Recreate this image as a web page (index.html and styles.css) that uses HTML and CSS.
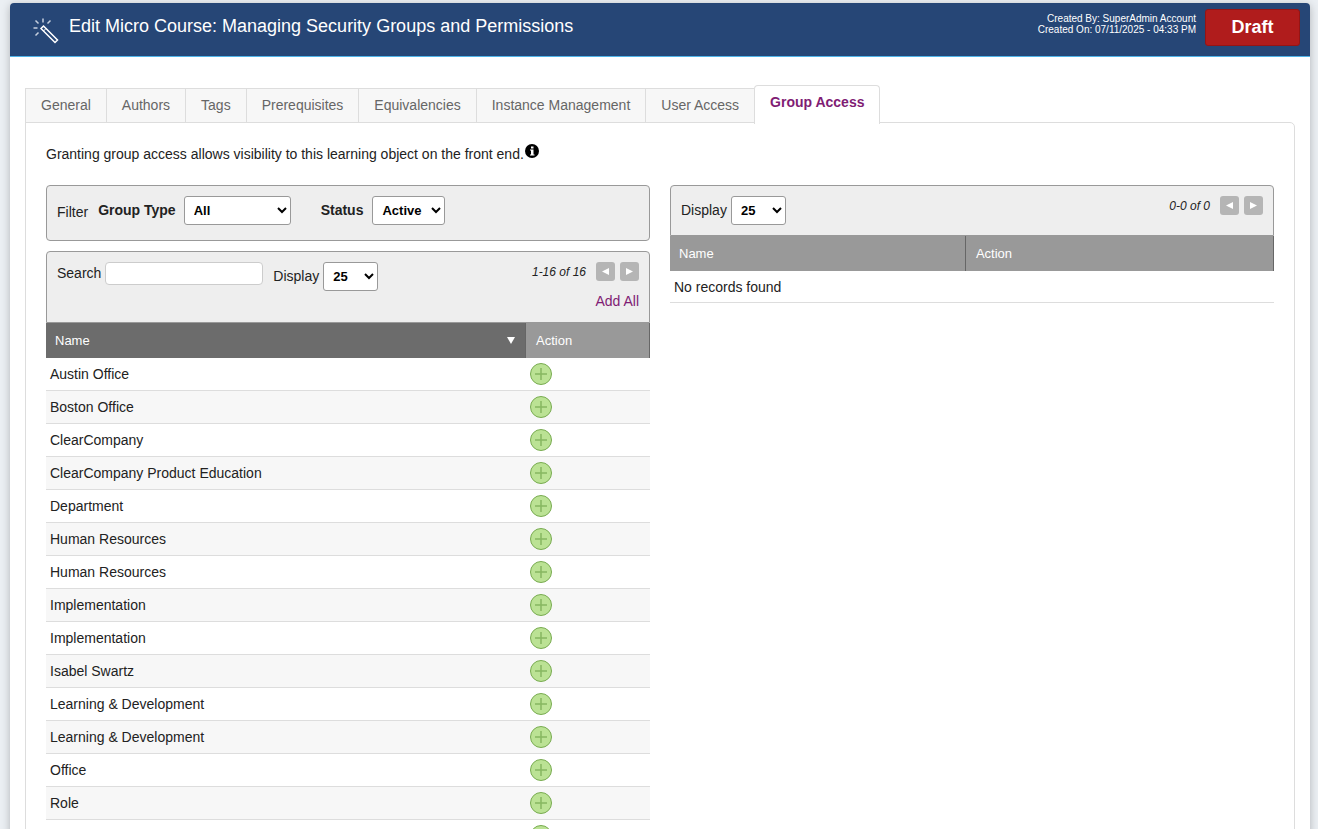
FILE: index.html
```
<!DOCTYPE html>
<html lang="en">
<head>
    <meta charset="UTF-8">
    <meta name="viewport" content="width=device-width, initial-scale=1.0">
    <title>Edit Micro Course</title>
    <link rel="stylesheet" href="styles.css">
</head>
<body>
<svg class="symbols" aria-hidden="true">
    <symbol id="plus" viewBox="0 0 22 22">
        <circle cx="11" cy="11" r="10.5" fill="#bbe294" stroke="#78ab50"/>
        <path d="M11 5v12M5 11h12" fill="none" stroke="#87b760" stroke-width="1.5"/>
    </symbol>
</svg>

<div class="page">
    <header class="page-header">
        <svg class="wand" viewBox="0 0 26 26" fill="none" stroke="#fff">
            <path d="M10.500 8L24.500 22L22 24.500L8 10.500Z" stroke-width="1.500"/>
            <path d="M10.500 13L13 10.500" stroke-width="1"/>
            <path d="M10 0.500V4.500M2.500 2.500L5.500 5.500M17.500 2.500L14.500 5.500M0.500 10H4.500M2.500 17.500L5.500 14.500" stroke="#c6d0df" stroke-width="1.500"/>
        </svg>
        <h1>Edit Micro Course: Managing Security Groups and Permissions</h1>
        <div class="created">
            Created By: SuperAdmin Account<br>
            Created On: 07/11/2025 - 04:33 PM
        </div>
        <div class="status-badge">Draft</div>
    </header>

    <main class="content">
        <nav class="tabs">
            <a href="#general">General</a>
            <a href="#authors">Authors</a>
            <a href="#tags">Tags</a>
            <a href="#prerequisites">Prerequisites</a>
            <a href="#equivalencies">Equivalencies</a>
            <a href="#instances">Instance Management</a>
            <a href="#users">User Access</a>
            <a href="#groups" class="active">Group Access</a>
        </nav>

        <section class="panel">
            <p class="intro">Granting group access allows visibility to this learning object on the front end.<svg class="info" viewBox="0 0 14 14">
                <circle cx="7" cy="7" r="7"/>
                <path d="M6 2.500h2.500v2H6zM5 5.500h3.500v5h1v1H5v-1h1v-4H5z" fill="#fff"/>
            </svg></p>

            <div class="columns">
                <div class="column">
                    <div class="filter-box">
                        <span class="filter-title">Filter</span>
                        <label for="groupType">Group Type</label>
                        <select id="groupType" class="type-select">
                            <option>All</option>
                        </select>
                        <label for="status" class="status-label">Status</label>
                        <select id="status" class="status-select">
                            <option>Active</option>
                        </select>
                    </div>

                    <div class="toolbar">
                        <div class="search">
                            <label for="search">Search</label>
                            <input type="text" id="search">
                        </div>
                        <div class="display">
                            <label for="displayLeft">Display</label>
                            <select id="displayLeft">
                                <option>25</option>
                            </select>
                        </div>
                        <div class="paging">
                            <div class="pager">
                                <i>1-16 of 16</i>
                                <button type="button" aria-label="Previous page"><svg viewBox="0 0 19 19"><path d="M6 9.500L13 6v7z"/></svg></button>
                                <button type="button" aria-label="Next page"><svg viewBox="0 0 19 19"><path d="M13 9.500L6 6v7z"/></svg></button>
                            </div>
                            <a href="#add-all">Add All</a>
                        </div>
                    </div>
                    <table class="available">
                        <thead>
                            <tr>
                                <th class="sorted"><span class="sort">Name <svg viewBox="0 0 8 7"><path d="M0 0h8L4 7z"/></svg></span></th>
                                <th>Action</th>
                            </tr>
                        </thead>
                        <tbody>
                            <tr><td>Austin Office</td><td><button type="button" aria-label="Add"><svg><use href="#plus"/></svg></button></td></tr>
                            <tr><td>Boston Office</td><td><button type="button" aria-label="Add"><svg><use href="#plus"/></svg></button></td></tr>
                            <tr><td>ClearCompany</td><td><button type="button" aria-label="Add"><svg><use href="#plus"/></svg></button></td></tr>
                            <tr><td>ClearCompany Product Education</td><td><button type="button" aria-label="Add"><svg><use href="#plus"/></svg></button></td></tr>
                            <tr><td>Department</td><td><button type="button" aria-label="Add"><svg><use href="#plus"/></svg></button></td></tr>
                            <tr><td>Human Resources</td><td><button type="button" aria-label="Add"><svg><use href="#plus"/></svg></button></td></tr>
                            <tr><td>Human Resources</td><td><button type="button" aria-label="Add"><svg><use href="#plus"/></svg></button></td></tr>
                            <tr><td>Implementation</td><td><button type="button" aria-label="Add"><svg><use href="#plus"/></svg></button></td></tr>
                            <tr><td>Implementation</td><td><button type="button" aria-label="Add"><svg><use href="#plus"/></svg></button></td></tr>
                            <tr><td>Isabel Swartz</td><td><button type="button" aria-label="Add"><svg><use href="#plus"/></svg></button></td></tr>
                            <tr><td>Learning &amp; Development</td><td><button type="button" aria-label="Add"><svg><use href="#plus"/></svg></button></td></tr>
                            <tr><td>Learning &amp; Development</td><td><button type="button" aria-label="Add"><svg><use href="#plus"/></svg></button></td></tr>
                            <tr><td>Office</td><td><button type="button" aria-label="Add"><svg><use href="#plus"/></svg></button></td></tr>
                            <tr><td>Role</td><td><button type="button" aria-label="Add"><svg><use href="#plus"/></svg></button></td></tr>
                            <tr><td></td><td><button type="button" aria-label="Add"><svg><use href="#plus"/></svg></button></td></tr>
                        </tbody>
                    </table>
                </div>

                <div class="column">
                    <div class="toolbar">
                        <div class="display">
                            <label for="displayRight">Display</label>
                            <select id="displayRight">
                                <option>25</option>
                            </select>
                        </div>
                        <div class="paging">
                            <div class="pager">
                                <i>0-0 of 0</i>
                                <button type="button" aria-label="Previous page"><svg viewBox="0 0 19 19"><path d="M6 9.500L13 6v7z"/></svg></button>
                                <button type="button" aria-label="Next page"><svg viewBox="0 0 19 19"><path d="M13 9.500L6 6v7z"/></svg></button>
                            </div>
                        </div>
                    </div>
                    <table class="selected">
                        <thead>
                            <tr>
                                <th>Name</th>
                                <th>Action</th>
                            </tr>
                        </thead>
                        <tbody>
                            <tr><td colspan="2">No records found</td></tr>
                        </tbody>
                    </table>
                </div>
            </div>
        </section>
    </main>
</div>
</body>
</html>
```
FILE: styles.css
```
* {
    box-sizing: border-box;
}
body {
    margin: 0;
    padding: 3px 8px 0 10px;
    height: 100vh;
    overflow: hidden;
    background-color: #ebeff3;
    color: #222;
    font-family: Arial, "Liberation Sans", sans-serif;
    font-size: 14px;
    line-height: 20px;
}
a {
    color: #7f1c74;
    text-decoration: none;
}
button {
    border: 0;
    padding: 0;
    cursor: pointer;
}
.symbols {
    display: none;
}
.page {
    background-color: #fff;
    border-radius: 4px 4px 0 0;
    box-shadow: 0 2px 8px rgba(0, 0, 0, 0.25);
}

/* Header */
.page-header {
    display: flex;
    align-items: flex-start;
    min-height: 54px;
    padding: 6px 10px 7px 23px;
    background-color: #264676;
    border-bottom: 1px solid #4fb3e8;
    border-radius: 4px 4px 0 0;
    color: #fff;
}
.wand {
    width: 26px;
    height: 26px;
    margin: 9px 10px 0 0;
}
h1 {
    flex: 1;
    margin: 6px 0 0;
    font-size: 18px;
    font-weight: normal;
    line-height: 22px;
}
.created {
    margin: 4px 9px 0 0;
    font-size: 10px;
    line-height: 11px;
    text-align: right;
}
.status-badge {
    width: 95px;
    padding: 7px 0;
    border: 1px solid #961414;
    border-radius: 3px;
    background-color: #b01c1c;
    font-size: 18px;
    font-weight: bold;
    line-height: 21px;
    text-align: center;
}

/* Tabs */
.content {
    padding: 28px 15px 0;
}
.tabs {
    display: flex;
    align-items: flex-end;
    margin-bottom: -1px;
}
.tabs a {
    height: 35px;
    padding: 0 15px;
    border: 1px solid #ddd;
    border-right: 0;
    background-color: #f7f7f7;
    color: #666;
    line-height: 33px;
}
.tabs .active {
    height: 39px;
    margin-bottom: -1px;
    border-right: 1px solid #ddd;
    border-bottom: 0;
    border-radius: 4px 4px 0 0;
    background-color: #fff;
    color: #7f1c74;
    font-weight: bold;
}
.panel {
    padding: 20px;
    border: 1px solid #ddd;
    border-radius: 0 5px 0 0;
}
.intro {
    margin: 0 0 20px;
    line-height: 22px;
}
.info {
    width: 14px;
    height: 14px;
    margin-left: 1px;
    vertical-align: 1px;
}
.columns {
    display: grid;
    grid-template-columns: 1fr 1fr;
    gap: 20px;
    align-items: start;
}

/* Filters and toolbars */
.filter-box,
.toolbar {
    display: flex;
    align-items: flex-start;
    padding: 10px;
    border: 1px solid #999;
    background-color: #eee;
}
.filter-box {
    min-height: 56px;
    margin-bottom: 10px;
    border-radius: 4px;
    font-weight: bold;
    line-height: 28px;
}
.filter-title {
    margin-right: 10px;
    padding-top: 2px;
    font-weight: normal;
}
.toolbar {
    border-radius: 4px 4px 0 0;
}
select {
    width: 55px;
    height: 29px;
    padding: 0 5px;
    border: 1px solid #999;
    border-radius: 3px;
    background-color: #fff;
    color: #000;
    font-family: inherit;
    font-size: 13px;
    font-weight: bold;
}
.type-select {
    width: 107px;
    margin: 0 30px 0 8px;
}
.status-select {
    width: 73px;
    margin-left: 9px;
}
.search,
.display {
    display: flex;
    gap: 4px;
    line-height: 28px;
}
.search {
    margin-right: 10px;
    line-height: 22px;
}
.search input {
    width: 158px;
    height: 23px;
    border: 1px solid #ccc;
    border-radius: 4px;
}
.paging {
    margin-left: auto;
    text-align: right;
}
.paging a {
    display: block;
    margin: 9px 0 1px;
}
.pager {
    display: flex;
    gap: 5px;
    font-size: 12px;
}
.pager i {
    margin-right: 5px;
}
.pager button {
    width: 19px;
    height: 19px;
    border-radius: 3px;
    background-color: #b5b5b5;
}
.pager svg {
    display: block;
    fill: #fff;
}

/* Tables */
table {
    width: 100%;
    border-collapse: separate;
    border-spacing: 0;
    table-layout: fixed;
}
th {
    height: 35px;
    padding: 0 10px;
    border-right: 1px solid #666;
    background-color: #999;
    color: #fff;
    font-size: 13px;
    font-weight: normal;
    text-align: left;
}
.available th:first-child {
    width: 480px;
}
.selected th:first-child {
    width: 49%;
}
th:first-child {
    padding-left: 9px;
}
.available .sorted {
    background-color: #6c6c6c;
}
.sort {
    display: flex;
    align-items: center;
    justify-content: space-between;
}
.sort svg {
    width: 8px;
    height: 7px;
    fill: #fff;
}
td {
    height: 33px;
    padding: 0 4px;
    border-bottom: 1px solid #ddd;
}
.selected td {
    height: 32px;
}
tbody tr:nth-child(even) {
    background-color: #f7f7f7;
}
td button {
    display: block;
    width: 22px;
    height: 22px;
    border-radius: 50%;
    background: none;
}
td svg {
    display: block;
    width: 22px;
    height: 22px;
}
```
